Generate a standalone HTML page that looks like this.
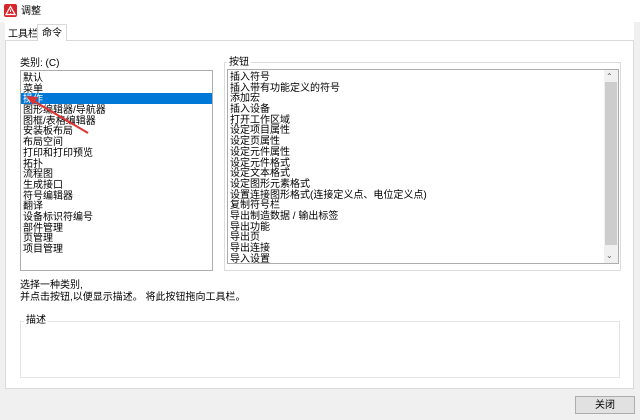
<!DOCTYPE html>
<html><head><meta charset="utf-8"><style>
*{margin:0;padding:0;box-sizing:border-box}
body{width:640px;height:420px;overflow:hidden;background:#f0f0f0;font-family:"Liberation Sans","Noto Sans CJK SC",sans-serif;font-size:10px;line-height:12px;color:#000;position:relative}
.abs{position:absolute}
.list div{height:10.7px;line-height:10.7px;padding-left:2px;white-space:nowrap}
.list div span{position:relative;top:2px}
</style></head><body>
<div class="abs" style="left:0;top:0;width:640px;height:40px;background:#fff"></div>
<div class="abs" style="left:4px;top:4px;width:13px;height:13px;background:#d9262b;border-radius:2px"></div>
<svg class="abs" style="left:4px;top:4px" width="13" height="13"><path d="M6.5 2.5 L11 10.5 L2 10.5 Z" fill="none" stroke="#fff" stroke-width="1.2"/><path d="M6.5 5.5v2.5M6.5 9v.6" stroke="#fff" stroke-width="1"/></svg>
<div class="abs" style="left:21px;top:6px">调整</div>
<div class="abs" style="left:0;top:22px;width:5px;height:398px;background:#f0f0f0"></div>
<div class="abs" style="left:634px;top:22px;width:6px;height:398px;background:#f0f0f0"></div>
<div class="abs" style="left:0;top:389px;width:640px;height:31px;background:#f0f0f0"></div>
<div class="abs" style="left:5px;top:40px;width:629px;height:349px;background:#fff;border:1px solid #d9d9d9"></div>
<div class="abs" style="left:8px;top:29px">工具栏</div>
<div class="abs" style="left:37px;top:24px;width:30px;height:17px;background:#fff;border:1px solid #d9d9d9;border-bottom:none;padding:3px 0 0 4px">命令</div>
<div class="abs" style="left:20px;top:58px">类别: (C)</div>
<div class="abs list" style="left:20px;top:70px;width:193px;height:201px;border:1px solid #adadad;background:#fff;padding-top:1px">
<div><span>默认</span></div><div><span>菜单</span></div><div style="background:#0078d7;color:#fff"><span>操作</span></div><div><span>图形编辑器/导航器</span></div><div><span>图框/表格编辑器</span></div><div><span>安装板布局</span></div><div><span>布局空间</span></div><div><span>打印和打印预览</span></div><div><span>拓扑</span></div><div><span>流程图</span></div><div><span>生成接口</span></div><div><span>符号编辑器</span></div><div><span>翻译</span></div><div><span>设备标识符编号</span></div><div><span>部件管理</span></div><div><span>页管理</span></div><div><span>项目管理</span></div>
</div>
<div class="abs" style="left:224px;top:62px;width:397px;height:209px;border:1px solid #dcdcdc"></div>
<div class="abs" style="left:227px;top:57px;background:#fff;padding:0 2px">按钮</div>
<div class="abs list" style="left:227px;top:69px;width:392px;height:195px;border:1px solid #adadad;background:#fff;padding-top:1px">
<div><span>插入符号</span></div><div><span>插入带有功能定义的符号</span></div><div><span>添加宏</span></div><div><span>插入设备</span></div><div><span>打开工作区域</span></div><div><span>设定项目属性</span></div><div><span>设定页属性</span></div><div><span>设定元件属性</span></div><div><span>设定元件格式</span></div><div><span>设定文本格式</span></div><div><span>设定图形元素格式</span></div><div><span>设置连接图形格式(连接定义点、电位定义点)</span></div><div><span>复制符号栏</span></div><div><span>导出制造数据 / 输出标签</span></div><div><span>导出功能</span></div><div><span>导出页</span></div><div><span>导出连接</span></div><div><span>导入设置</span></div>
</div>
<div class="abs" style="left:604px;top:70px;width:14px;height:193px;background:#f0f0f0"></div>
<div class="abs" style="left:605px;top:82px;width:12px;height:163px;background:#cdcdcd"></div>
<div class="abs" style="left:606px;top:71px;font-size:8px;color:#606060">&#8963;</div>
<div class="abs" style="left:606px;top:250px;font-size:8px;color:#606060">&#8964;</div>
<div class="abs" style="left:20px;top:280px">选择一种类别,<br>并点击按钮,以便显示描述。 将此按钮拖向工具栏。</div>
<div class="abs" style="left:20px;top:321px;width:600px;height:57px;border:1px solid #e3e3e3"></div>
<div class="abs" style="left:24px;top:315px;background:#fff;padding:0 2px">描述</div>
<div class="abs" style="left:575px;top:396px;width:60px;height:18px;border:1px solid #adadad;background:#e1e1e1;text-align:center;line-height:17px">关闭</div>
<svg class="abs" style="left:0;top:0" width="640" height="420"><line x1="88" y1="133" x2="32" y2="100" stroke="#e0332f" stroke-width="2"/><path d="M26 96 L38 97 L33 105 Z" fill="#e0332f"/></svg>
</body></html>
